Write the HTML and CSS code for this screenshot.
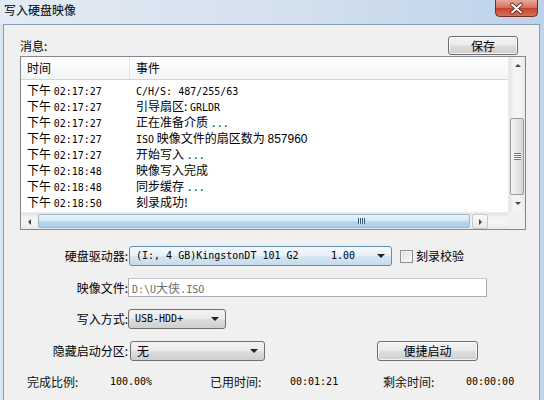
FILE: index.html
```html
<!DOCTYPE html>
<html lang="zh-CN">
<head>
  <meta charset="UTF-8">
  <title>写入硬盘映像</title>
  <link rel="stylesheet" href="styles.css">
</head>
<body>
  <div class="titlebar">
    <div class="title">写入硬盘映像</div>
    <div class="close">
      <svg width="43" height="17" viewBox="0 0 43 17">
        <defs>
          <linearGradient id="cg" x1="0" y1="0" x2="0" y2="1">
            <stop offset="0" stop-color="#e8a898"/>
            <stop offset="0.45" stop-color="#d47462"/>
            <stop offset="0.5" stop-color="#c4432e"/>
            <stop offset="1" stop-color="#d8735a"/>
          </linearGradient>
        </defs>
        <path d="M0.5 0 V12.5 Q0.5 16.5 4.5 16.5 H38.5 Q42.5 16.5 42.5 12.5 V0" fill="url(#cg)" stroke="#7b2a20"/>
        <path d="M17 4.5 L26 12.5 M26 4.5 L17 12.5" stroke="#4a1a14" stroke-width="3.6" stroke-linecap="round"/>
        <path d="M17 4.5 L26 12.5 M26 4.5 L17 12.5" stroke="#fff" stroke-width="2" stroke-linecap="round"/>
      </svg>
    </div>
  </div>

  <div class="client">
    <div class="msg-head">
      <span>消息:</span>
      <button class="btn save-btn">保存</button>
    </div>

    <div class="list">
      <div class="list-body">
        <div class="list-header">
          <div class="col-time">时间</div>
          <div class="col-event">事件</div>
        </div>
        <div class="list-row"><div class="col-time">下午 <span class="m">02:17:27</span></div><div class="col-event"><span class="m">C/H/S: 487/255/63</span></div></div>
        <div class="list-row"><div class="col-time">下午 <span class="m">02:17:27</span></div><div class="col-event">引导扇区: <span class="m">GRLDR</span></div></div>
        <div class="list-row"><div class="col-time">下午 <span class="m">02:17:27</span></div><div class="col-event">正在准备介质 <span class="m">...</span></div></div>
        <div class="list-row"><div class="col-time">下午 <span class="m">02:17:27</span></div><div class="col-event"><span class="m">ISO</span> 映像文件的扇区数为 <span class="num">857960</span></div></div>
        <div class="list-row"><div class="col-time">下午 <span class="m">02:17:27</span></div><div class="col-event">开始写入 <span class="m">...</span></div></div>
        <div class="list-row"><div class="col-time">下午 <span class="m">02:18:48</span></div><div class="col-event">映像写入完成</div></div>
        <div class="list-row"><div class="col-time">下午 <span class="m">02:18:48</span></div><div class="col-event">同步缓存 <span class="m">...</span></div></div>
        <div class="list-row"><div class="col-time">下午 <span class="m">02:18:50</span></div><div class="col-event">刻录成功!</div></div>
      </div>

      <div class="vscroll">
        <div class="sb-btn"><span class="tri-up"></span></div>
        <div class="vthumb"><span class="grip-h"></span></div>
        <div class="sb-btn sb-end"><span class="tri-down"></span></div>
      </div>

      <div class="hscroll">
        <div class="sb-btn"><span class="tri-left"></span></div>
        <div class="hthumb"><span class="grip-v"></span></div>
        <div class="sb-btn sb-box"><span class="tri-right"></span></div>
      </div>
      <div class="corner"></div>
    </div>

    <div class="form">
      <div class="form-row">
        <label class="lbl">硬盘驱动器:</label>
        <div class="combo combo-hot drive">
          <span class="combo-text m">(I:, 4 GB)KingstonDT 101 G2</span>
          <span class="m">1.00</span>
          <span class="arrow"></span>
        </div>
        <span class="check"></span>
        <span class="check-label">刻录校验</span>
      </div>
      <div class="form-row">
        <label class="lbl">映像文件:</label>
        <div class="input"><span class="m">D:\U</span>大侠<span class="m">.ISO</span></div>
      </div>
      <div class="form-row">
        <label class="lbl">写入方式:</label>
        <div class="combo mode">
          <span class="combo-text m">USB-HDD+</span>
          <span class="arrow"></span>
        </div>
      </div>
      <div class="form-row">
        <label class="lbl">隐藏启动分区:</label>
        <div class="combo hidden-part">
          <span class="combo-text">无</span>
          <span class="arrow"></span>
        </div>
        <button class="btn quick-btn">便捷启动</button>
      </div>
    </div>

    <div class="stats">
      <span class="stat-lbl">完成比例:</span>
      <span class="m">100.00%</span>
      <span class="stat-lbl">已用时间:</span>
      <span class="m">00:01:21</span>
      <span class="stat-lbl">剩余时间:</span>
      <span class="m">00:00:00</span>
    </div>
  </div>
</body>
</html>
```

FILE: styles.css
```css
*, *::before, *::after { box-sizing: border-box; }
body { margin: 0; width: 544px; height: 400px; overflow: hidden; font-family: "Noto Sans CJK SC", sans-serif; font-size: 12px; color: #000; background: linear-gradient(90deg, #d9e5f2, #c0d4ea); }
.m { font-family: "DejaVu Sans Mono", monospace; font-size: 10px; }
.num { font-family: "Liberation Sans", sans-serif; font-size: 12px; }

.titlebar { height: 24px; display: flex; justify-content: space-between; background: linear-gradient(90deg, #e4ebf4 0%, #d3e0ee 55%, #bcd2ea 100%); }
.title { padding: 2px 0 0 4px; line-height: 16px; }
.close { width: 43px; height: 17px; margin-right: 6px; }
.close svg { display: block; }

.client { margin: 0 4px 0 3px; height: 376px; background: #f0f0f0; border: 1px solid #8c9db2; border-bottom: none; padding-left: 16px; }

.msg-head { width: 498px; margin-top: 11px; display: flex; justify-content: space-between; align-items: center; height: 19px; line-height: 16px; }
.btn { font-family: "Noto Sans CJK SC", sans-serif; font-size: 12px; color: #000; padding: 0; line-height: 16px; border: 1px solid #707070; border-radius: 3px; background: linear-gradient(#f2f2f2 0%, #ebebeb 48%, #dddddd 52%, #cfcfcf 100%); box-shadow: inset 0 0 0 1px rgba(255,255,255,0.7); }
.save-btn { width: 70px; height: 19px; }

.list { margin-top: 1px; width: 506px; height: 174px; border: 1px solid #828790; background: #fff; display: grid; grid-template-columns: 487px 17px; grid-template-rows: 155px 17px; }
.list-body { overflow: hidden; }
.list-header { display: flex; height: 23px; line-height: 22px; background: linear-gradient(#ffffff, #f4f5f7); border-bottom: 1px solid #d5d5d5; }
.list-header .col-time { border-right: 1px solid #e3e4e6; }
.list-row { display: flex; height: 16px; line-height: 16px; }
.list-header + .list-row { margin-top: 2px; }
.col-time { width: 109px; padding-left: 6px; white-space: nowrap; }
.col-event { padding-left: 6px; white-space: nowrap; }

.vscroll { display: flex; flex-direction: column; background: linear-gradient(90deg, #e4e4e4, #f4f4f4 30%, #f4f4f4 70%, #e8e8e8); border-left: 1px solid #ececec; }
.hscroll { display: flex; align-items: stretch; background: linear-gradient(#e4e4e4, #f4f4f4 30%, #f4f4f4 70%, #e8e8e8); border-top: 1px solid #ececec; }
.corner { background: #f0f0f0; }
.sb-btn { width: 17px; height: 17px; flex: none; display: flex; align-items: center; justify-content: center; }
.sb-end { margin-top: auto; }
.sb-box { margin-left: 2px; border: 1px solid #c9c9c9; border-radius: 2px; background: linear-gradient(#fafafa, #e6e6e6); width: 16px; height: 15px; margin-top: 1px; }
.vthumb { margin: 44px 1px 0; height: 77px; border: 1px solid #9a9a9a; border-radius: 2px; background: linear-gradient(90deg, #f4f4f4, #e5e5e5 50%, #d6d6d6); display: flex; align-items: center; justify-content: center; }
.hthumb { width: 432px; margin: 1px 0; border: 1px solid #9db7cc; border-radius: 2px; background: linear-gradient(#e8f3fb, #d3e7f6 50%, #bcd9ef 52%, #a9cde8); display: flex; align-items: center; justify-content: center; }
.grip-h { width: 7px; height: 7px; background: repeating-linear-gradient(#7a7a7a 0 1px, #f6f6f6 1px 2px); }
.grip-v { width: 7px; height: 6px; margin-left: 214px; background: repeating-linear-gradient(90deg, #3c5a74 0 1px, #dcecf8 1px 2px); }
.tri-up, .tri-down, .tri-left, .tri-right { width: 0; height: 0; border: 3px solid transparent; }
.tri-up { border-bottom: 3px solid #444; border-top: 0; }
.tri-down { border-top: 3px solid #444; border-bottom: 0; }
.tri-left { border-right: 3px solid #444; border-left: 0; }
.tri-right { border-left: 3px solid #444; border-right: 0; }

.form { margin-top: 16px; display: flex; flex-direction: column; gap: 11.7px; }
.form-row { display: flex; align-items: center; height: 20px; }
.lbl { width: 108px; text-align: right; line-height: 16px; color: #000; }
.combo { height: 20px; margin-left: 1px; display: flex; align-items: center; padding-left: 6px; border: 1px solid #707070; border-radius: 3px; background: linear-gradient(#f2f2f2 0%, #ebebeb 48%, #dddddd 52%, #cfcfcf 100%); white-space: nowrap; line-height: 16px; }
.combo-hot { border-color: #5f8db3; background: linear-gradient(#f5f9fc 0%, #e8f1f8 48%, #d6e6f2 52%, #c5dbec 100%); }
.combo-text { flex: 1; }
.arrow { width: 0; height: 0; margin: 0 6px 0 12px; border-left: 4px solid transparent; border-right: 4px solid transparent; border-top: 4px solid #222; }
.drive { width: 263px; }
.drive .arrow { margin-left: 22px; }
.mode { width: 98px; margin-left: 0; }
.hidden-part { width: 135px; margin-left: 2px; }
.check { width: 13px; height: 13px; margin-left: 8px; border: 1px solid #8f8f8f; background: linear-gradient(135deg, #dcdcdc, #fdfdfd); box-shadow: inset 0 0 0 1px #f4f4f4; }
.check-label { margin-left: 3px; line-height: 16px; }
.input { width: 359px; height: 19px; margin-left: 0; border: 1px solid #abadb3; border-top-color: #c3c6cb; background: #fff; padding-left: 3px; line-height: 17px; color: #6d6d6d; font-size: 12px; white-space: nowrap; }
.quick-btn { width: 101px; height: 20px; margin-left: 112px; }

.stats { margin-top: 13px; padding-left: 7px; display: grid; grid-template-columns: 83px 100px 80px 93px 83px auto; line-height: 16px; align-items: center; }
.stat-lbl { color: #111; }
```
